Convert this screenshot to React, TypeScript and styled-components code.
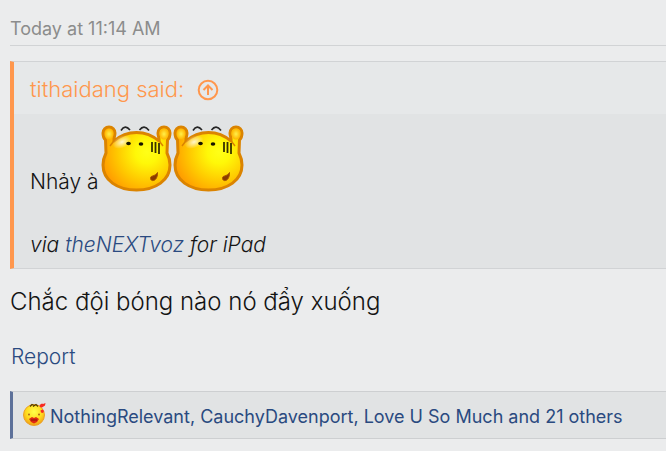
import React from "react";
import styled, { createGlobalStyle } from "styled-components";

const GlobalStyle = createGlobalStyle`
  * { box-sizing: border-box; }
  html { background: #ebeced; }
  body {
    margin: 0;
    background: #ebeced;
    color: #141414;
    font-family: Inter, "Noto Sans", sans-serif;
    font-weight: 300;
  }
`;

const Post = styled.article`
  padding: 10px 0 12px 10px;
  overflow: hidden;
`;

const PostHeader = styled.header`
  height: 36px;
  border-bottom: 1px solid #d1d3d5;
  color: #8c8c8c;
  font-size: 18px;
  font-weight: 400;
  line-height: 38px;
`;

const Quote = styled.blockquote`
  margin: 15px 0 0;
  border: 1px solid #d1d3d5;
  border-right: 0;
  border-left: 4px solid #ff974d;
  background: #e1e3e4;
`;

const QuoteSource = styled.a`
  display: flex;
  align-items: center;
  gap: 13px;
  padding: 3px 16px 0;
  background: #e6e8e9;
  color: #ff974d;
  font-size: 22px;
  line-height: 49px;
  text-decoration: none;
`;

const QuoteBody = styled.div`
  padding: 11px 16px 7px;
  font-size: 21px;
  line-height: 32px;
`;

const QuoteLine = styled.p`
  display: flex;
  align-items: flex-end;
  margin: 0;
`;

const QuoteText = styled.span`
  margin-right: 2px;
  line-height: 22px;
`;

const Signature = styled.p`
  margin: 36px 0 0;
  font-style: italic;
`;

const TextLink = styled.a`
  color: #2a4a80;
  text-decoration: none;
`;

const Message = styled.p`
  margin: 12px 0 0;
  font-size: 24px;
  line-height: 42px;
`;

const Actions = styled.div`
  margin-top: 16px;
  padding-left: 1px;
  font-size: 21px;
  line-height: 36px;
`;

const Reactions = styled.div`
  display: flex;
  align-items: center;
  gap: 4px;
  height: 48px;
  margin-top: 16px;
  padding: 2px 0 0 9px;
  border: 1px solid #cdcfd1;
  border-right: 0;
  border-left: 3px solid #5c7099;
  background: #e1e3e4;
  font-size: 18px;
  font-weight: 400;
  white-space: nowrap;
`;

const Emote = styled.svg`
  display: block;
  flex: none;
`;

const ReactionEmote = styled(Emote)`
  margin-bottom: 5px;
`;

function Faint({ id }: { id: string }) {
  return (
    <Emote width="72" height="68" viewBox="0 0 72 68" role="img" aria-label="Shocked smiley">
      <defs>
        <radialGradient id={id} gradientUnits="userSpaceOnUse" cx="46" cy="27" r="46">
          <stop offset="0" stopColor="#ffff18" />
          <stop offset="0.25" stopColor="#fff808" />
          <stop offset="0.65" stopColor="#ffc800" />
          <stop offset="1" stopColor="#ff9c00" />
        </radialGradient>
        <radialGradient id={`${id}-shine`}>
          <stop offset="0" stopColor="#fff" stopOpacity="0.8" />
          <stop offset="1" stopColor="#fff" stopOpacity="0" />
        </radialGradient>
        <radialGradient id={`${id}-hand`}>
          <stop offset="0" stopColor="#fff04a" />
          <stop offset="1" stopColor="#ffb400" />
        </radialGradient>
      </defs>
      <path
        d="M5 28L4.500 15C2.500 13 2 11 2 8C2 4.500 4.500 2 8 2C11.500 2 14 4.500 14 8C14 11 12.500 13 13 16C26 4.500 45 4.500 58 16C58.500 13 57 11 57 8C57 4.500 59.500 2 63 2C66.500 2 69 4.500 69 8C69 11 68.500 13 66.500 15L66 28C68 32 69 35 69 40C69 55 55 65 35.500 65C16 65 2 55 2 40C2 35 3 32 5 28Z"
        fill={`url(#${id})`}
        stroke="#db8400"
        strokeWidth="3"
        strokeLinejoin="round"
      />
      <path d="M13.500 15L9 21M57.500 15L62 21" fill="none" stroke="#db8400" strokeWidth="1.500" />
      <ellipse cx="8" cy="9" rx="4.500" ry="5.500" fill={`url(#${id}-hand)`} />
      <ellipse cx="63" cy="9" rx="4.500" ry="5.500" fill={`url(#${id}-hand)`} />
      <ellipse cx="21" cy="17" rx="10" ry="6" fill={`url(#${id}-shine)`} transform="rotate(-24 21 17)" />
      <path d="M20 5.500Q24-1 29 5M38.500 5Q43-1 48 5.500" fill="none" stroke="#252525" strokeWidth="1.600" />
      <ellipse cx="27.500" cy="18.500" rx="2.300" ry="1.700" fill="#161400" />
      <ellipse cx="40" cy="19" rx="2.300" ry="1.700" fill="#161400" />
      <path d="M51 17V27M54.500 17V28M58 18V29" stroke="#393200" strokeWidth="1.800" />
      <path d="M56.500 47.500C54 52 49 50 49.500 53.500C50 57.500 57 56 56.500 47.500Z" fill="#8a3b00" stroke="#a75500" />
    </Emote>
  );
}

function Kiss() {
  return (
    <ReactionEmote width="24" height="24" viewBox="0 0 24 24" role="img" aria-label="Love reaction">
      <defs>
        <radialGradient id="kiss" cx="0.5" cy="0.35" r="0.65">
          <stop offset="0" stopColor="#ffff4a" />
          <stop offset="0.6" stopColor="#ffd91c" />
          <stop offset="1" stopColor="#f09b18" />
        </radialGradient>
      </defs>
      <circle cx="12" cy="13" r="10.500" fill="url(#kiss)" stroke="#eba128" />
      <path d="M8 4.500L10 2.500L12 3.500M11 4.500L14 2.500L16 4.500" fill="none" stroke="#4f3900" strokeWidth="1.100" />
      <circle cx="7" cy="12.500" r="0.900" fill="#a65716" />
      <circle cx="17" cy="12.500" r="0.900" fill="#a65716" />
      <path d="M7 17L10 15L12 16L14 15L17 17L15 20L12 21.500L9 20Z" fill="#e02713" />
      <path d="M9 18H15" stroke="#861b08" />
      <path d="M17.500 3L20 1.500L21 2L23.500 1L23 3.500L20 5.500L18 5ZM18.500 8.500L20.500 7.500L22 9L21 11L19 10.500Z" fill="#f72a22" />
    </ReactionEmote>
  );
}

function JumpIcon() {
  return (
    <Emote width="22" height="22" viewBox="0 0 22 22" aria-hidden="true">
      <g fill="none" stroke="currentColor" strokeWidth="2">
        <circle cx="11" cy="11" r="9.300" />
        <path d="M11 16V7M6.500 11L11 6.500L15.500 11" />
      </g>
    </Emote>
  );
}

export default function App() {
  return (
    <>
      <GlobalStyle />
      <Post>
        <PostHeader><time>Today at 11:14 AM</time></PostHeader>
        <Quote>
          <QuoteSource href="#source">
            <span>tithaidang said:</span>
            <JumpIcon />
          </QuoteSource>
          <QuoteBody>
            <QuoteLine>
              <QuoteText>Nhảy à</QuoteText>
              <Faint id="faint-one" />
              <Faint id="faint-two" />
            </QuoteLine>
            <Signature>
              via <TextLink href="#app">theNEXTvoz</TextLink> for iPad
            </Signature>
          </QuoteBody>
        </Quote>
        <Message>Chắc đội bóng nào nó đẩy xuống</Message>
        <Actions><TextLink href="#report">Report</TextLink></Actions>
        <Reactions>
          <Kiss />
          <TextLink href="#reactions">NothingRelevant, CauchyDavenport, Love U So Much and 21 others</TextLink>
        </Reactions>
      </Post>
    </>
  );
}
